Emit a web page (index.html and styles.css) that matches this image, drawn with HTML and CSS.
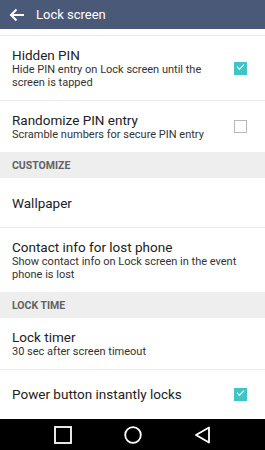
FILE: index.html
```html
<!DOCTYPE html>
<html lang="en">

<head>
    <meta charset="UTF-8">
    <meta name="viewport" content="width=device-width, initial-scale=1.0">
    <title>Lock screen</title>
    <link rel="stylesheet" href="styles.css">
</head>

<body>
    <div class="phone">
        <div class="toolbar">
            <svg class="back" width="16" height="14" viewBox="0 0 16 14">
                <path d="M15 7H2M7.5 1.5L2 7l5.5 5.5" fill="none" stroke="#fff" stroke-width="2"/>
            </svg>
            <span class="toolbar-title">Lock screen</span>
        </div>
        <div class="peek"></div>

        <div class="list">
            <div class="row divided">
                <div class="row-text">
                    <div class="row-title">Hidden PIN</div>
                    <div class="row-sub">Hide PIN entry on Lock screen until the screen is tapped</div>
                </div>
                <span class="check checked"></span>
            </div>
            <div class="row">
                <div class="row-text">
                    <div class="row-title">Randomize PIN entry</div>
                    <div class="row-sub">Scramble numbers for secure PIN entry</div>
                </div>
                <span class="check"></span>
            </div>

            <div class="section">Customize</div>
            <div class="row divided tall">
                <div class="row-text">
                    <div class="row-title">Wallpaper</div>
                </div>
            </div>
            <div class="row">
                <div class="row-text">
                    <div class="row-title">Contact info for lost phone</div>
                    <div class="row-sub">Show contact info on Lock screen in the event phone is lost</div>
                </div>
            </div>

            <div class="section">Lock time</div>
            <div class="row divided">
                <div class="row-text">
                    <div class="row-title">Lock timer</div>
                    <div class="row-sub">30 sec after screen timeout</div>
                </div>
            </div>
            <div class="row">
                <div class="row-text">
                    <div class="row-title">Power button instantly locks</div>
                </div>
                <span class="check checked"></span>
            </div>
        </div>

        <div class="navbar">
            <svg width="18" height="18" viewBox="0 0 18 18">
                <rect x="1" y="1" width="16" height="16" fill="none" stroke="#fff" stroke-width="1.8"/>
            </svg>
            <svg width="18" height="18" viewBox="0 0 18 18">
                <circle cx="9" cy="9" r="7.8" fill="none" stroke="#fff" stroke-width="1.8"/>
            </svg>
            <svg width="18" height="18" viewBox="0 0 18 18">
                <path d="M15 1.5V16.5L2 9Z" fill="none" stroke="#fff" stroke-width="1.8" stroke-linejoin="round"/>
            </svg>
        </div>
    </div>
</body>

</html>
```

FILE: styles.css
```css
body {
    margin: 0;
    font-family: Roboto, 'Liberation Sans', sans-serif;
    background-color: #fff;
}

.phone {
    width: 265px;
    height: 450px;
    display: flex;
    flex-direction: column;
    overflow: hidden;
}

.toolbar {
    height: 29px;
    flex-shrink: 0;
    background-color: #4b5979;
    color: #fff;
    display: flex;
    align-items: center;
    padding-left: 9px;
    gap: 11px;
}

.toolbar-title {
    font-size: 13px;
}

.peek {
    height: 6px;
    flex-shrink: 0;
    border-bottom: 1px solid #e8e8e8;
}

.list {
    flex: 1;
    overflow: hidden;
}

.row {
    display: flex;
    align-items: center;
    gap: 14px;
    min-height: 48px;
    box-sizing: border-box;
    padding: 11px 18px 11px 12px;
}

.row.tall {
    min-height: 50px;
}

.row.divided {
    border-bottom: 1px solid #ebebeb;
}

.row-text {
    flex: 1;
}

.row-title {
    font-size: 13.5px;
    line-height: 16px;
    color: #222;
}

.row-sub {
    font-size: 11px;
    line-height: 13px;
    color: #333;
}

.check {
    width: 13px;
    height: 13px;
    box-sizing: border-box;
    border: 1.5px solid #b8b8b8;
    flex-shrink: 0;
}

.check.checked {
    border: none;
    background-color: #3fc4c7;
    position: relative;
}

.check.checked::after {
    content: '';
    position: absolute;
    left: 3px;
    top: 2.5px;
    width: 6px;
    height: 3px;
    border-left: 1.5px solid #fff;
    border-bottom: 1.5px solid #fff;
    transform: rotate(-45deg);
}

.section {
    height: 26px;
    background-color: #eeeeee;
    display: flex;
    align-items: center;
    padding-left: 12px;
    font-size: 10.5px;
    font-weight: 700;
    text-transform: uppercase;
    color: #626262;
}

.navbar {
    height: 31px;
    flex-shrink: 0;
    background-color: #000;
    display: flex;
    align-items: center;
    justify-content: center;
    gap: 52px;
}
```
